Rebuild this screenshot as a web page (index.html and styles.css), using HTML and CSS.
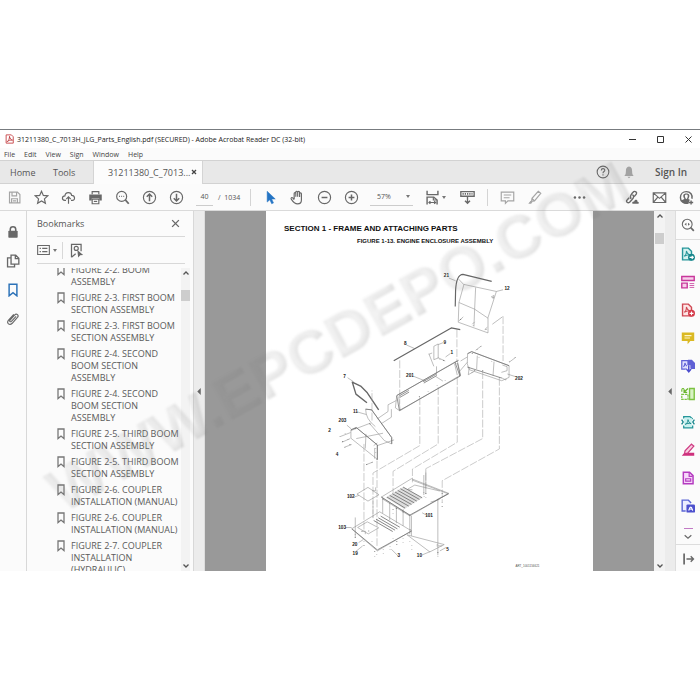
FILE: index.html
```html
<!DOCTYPE html>
<html lang="en">
<head>
<meta charset="utf-8">
<title>31211380_C_7013H_JLG_Parts_English.pdf</title>
<link rel="stylesheet" href="styles.css">
</head>
<body>
<main class="app">
  <header class="titlebar">
    <svg class="logo" viewBox="0 0 24 24"><path d="M3 1h14l5 5v17H3z" fill="#fff" stroke="#c9494c" stroke-width="2.5"/><path d="M6 19c4-3 6-8 6-14 1 6 4 9 8 10-6-1-10 1-14 4z" fill="none" stroke="#b62c30" stroke-width="2.2"/></svg>
    <h1 class="title">31211380_C_7013H_JLG_Parts_English.pdf (SECURED) - Adobe Acrobat Reader DC (32-bit)</h1>
    <div class="winbtns">
      <button aria-label="Minimize"><svg viewBox="0 0 9 9"><path d="M1 4.500h7"/></svg></button>
      <button aria-label="Maximize"><svg viewBox="0 0 9 9"><path d="M1.500 1.500h6v6h-6z"/></svg></button>
      <button aria-label="Close"><svg viewBox="0 0 9 9"><path d="M1.500 1.500l6 6m0-6l-6 6"/></svg></button>
    </div>
  </header>
  <nav class="menu">
    <button>File</button><button>Edit</button><button>View</button><button>Sign</button><button>Window</button><button>Help</button>
  </nav>
  <div class="tabs">
    <button class="tab home">Home</button>
    <button class="tab tools">Tools</button>
    <div class="doc-tab"><button class="tab">31211380_C_7013...</button><button class="close" aria-label="Close tab"><svg viewBox="0 0 6 6"><path d="M1 1l4 4m0-4L1 5"/></svg></button></div>
    <button class="round" aria-label="Help"><svg class="ico" viewBox="0 0 18 18"><circle cx="9" cy="9" r="7.500"/><path d="M6.800 7c0-3 4.500-3 4.500-.3C11.300 8.500 9 8.300 9 10.500M9 12v1.500"/></svg></button>
    <button class="round" aria-label="Notifications"><svg class="ico bell" viewBox="0 0 18 18"><path d="M9 2c3 1 4 2 4 6s1 5 2 6H3c1-1 2-2 2-6s1-5 4-6zM7 15h4l-2 2z"/></svg></button>
    <button class="signin">Sign In</button>
  </div>
  <div class="toolbar">
    <button class="tool pale" aria-label="Save"><svg class="ico" viewBox="0 0 18 18"><path d="M3 2.500h9.500l3 3v10H3zM6 3v4h5.500V3M5.500 15.500v-5h7v5M7 13h4"/></svg></button>
    <button class="tool" aria-label="Favorite"><svg class="ico" viewBox="0 0 18 18"><path d="M9 1.500l2.200 5 5.300.5-4 3.600 1.200 5.400L9 13.200 4.300 16l1.200-5.400-4-3.600 5.300-.5z"/></svg></button>
    <button class="tool" aria-label="Upload"><svg class="ico" viewBox="0 0 18 18"><path d="M6 12.500H4.500C.5 12 1 7 4.700 7 5.200 1.800 12.300 2 12.800 6.500c4.200 0 4.700 5.700.7 6H12M9 16.500V8.500M6.300 11L9 8.300l2.700 2.700"/></svg></button>
    <button class="tool" aria-label="Print"><svg class="ico" viewBox="0 0 18 18"><path d="M5 5V2h8v3M5 13v3.500h8V11H5z"/><path class="solid" d="M1.500 5.500h15v7h-3V10h-9v2.500h-3z"/><path d="M7 13.700h4"/></svg></button>
    <button class="tool" aria-label="Find"><svg class="ico" viewBox="0 0 18 18"><circle cx="8" cy="7.700" r="6"/><path d="M12.500 12l4 4.500" stroke-width="2.200"/><path d="M5 7.700h1m1.500 0h1m1.500 0h1" stroke-width="1.600"/></svg></button>
    <button class="tool" aria-label="Previous page"><svg class="ico" viewBox="0 0 18 18"><circle cx="9" cy="9" r="7.300"/><path d="M9 13.500V5M5.700 8L9 4.800 12.300 8" stroke-width="1.800"/></svg></button>
    <button class="tool" aria-label="Next page"><svg class="ico" viewBox="0 0 18 18"><circle cx="9" cy="9" r="7.300"/><path d="M9 4.500V13M5.700 10L9 13.200l3.300-3.200" stroke-width="1.800"/></svg></button>
    <input class="pageno" aria-label="Page number" value="40"><span class="total">/&nbsp; 1034</span>
    <span class="rule r1"></span>
    <button class="tool" aria-label="Select"><svg class="ico" viewBox="0 0 18 18"><path d="M5 1.500v13l3.200-2.800 2.200 4.800 2.200-1-2.200-4.700h4.300z" fill="#2474c4" stroke="#2474c4" stroke-width=".6"/></svg></button>
    <button class="tool" aria-label="Hand"><svg class="ico" viewBox="0 0 18 18"><path d="M5 11V4.200c0-1.500 2-1.500 2 0V8 2.600c0-1.500 2.200-1.500 2.200 0V8 2.800c0-1.500 2.300-1.500 2.300 0V8.500 4.500c0-1.500 2.200-1.500 2.200 0V12c0 3-1.700 4.700-4.700 4.700-3.200 0-4.500-1.200-7.500-5.800-.8-1.500.8-2.500 1.800-1.400L5 11.500"/></svg></button>
    <button class="tool" aria-label="Zoom out"><svg class="ico" viewBox="0 0 18 18"><circle cx="9" cy="9" r="7.300"/><path d="M5.500 9h7" stroke-width="1.800"/></svg></button>
    <button class="tool" aria-label="Zoom in"><svg class="ico" viewBox="0 0 18 18"><circle cx="9" cy="9" r="7.300"/><path d="M5.500 9h7M9 5.500v7" stroke-width="1.800"/></svg></button>
    <div class="zoom"><select aria-label="Zoom level"><option>57%</option></select><i class="caret"></i></div>
    <button class="tool fit" aria-label="Fit width"><svg class="ico" viewBox="0 0 18 18"><path d="M2.500 1v4.500h13V1M2.500 17.500V8.500h8l4 3.500v5.500" stroke-width="1.700"/><path d="M10 8.500V12h4M5 15h7M6.500 13.300L4.700 15l1.800 1.700M11 13.300l1.800 1.700-1.800 1.700"/></svg><i class="caret"></i></button>
    <button class="tool" aria-label="Keyboard"><svg class="ico" viewBox="0 0 18 18"><path d="M1 2h16v5.500H1zM9 7.500v8.500M6 13l3 3 3-3" stroke-width="1.600"/><path d="M3 4.700h12" stroke-dasharray="1.500 1.200" stroke-width="2"/></svg></button>
    <span class="rule r2"></span>
    <button class="tool pale" aria-label="Comment"><svg class="ico" viewBox="0 0 18 18"><path d="M1.500 2.500h15v10.500H9.500L6.500 16v-3h-5zM4.500 6h9M4.500 9.300h7"/></svg></button>
    <button class="tool pale" aria-label="Highlight"><svg class="ico" viewBox="0 0 18 18"><path d="M13.500 1.500l3 2.500-7.500 9-3.500.5.500-3.500zM6 10l3 3M5 13.500l-1.500 2"/><path class="solid" d="M4.500 13l2 1.500-1.500 2H1.500z"/></svg></button>
    <button class="tool more" aria-label="More tools"><svg class="ico" viewBox="0 0 18 18"><g class="solid"><circle cx="3.500" cy="9" r="1.500"/><circle cx="9" cy="9" r="1.500"/><circle cx="14.500" cy="9" r="1.500"/></g></svg></button>
    <div class="share">
      <button class="tool" aria-label="Share link"><svg class="ico" viewBox="0 0 18 18"><path d="M7.500 10.500C4.500 8 9 3 10.500 2s4.500.5 3 3L11 8M9 5.500c3 2 .5 5-1 6.500l-2.500 2.700C3.500 16.500.5 14 2.500 12L5 9.200" stroke-width="1.700"/><path class="solid" d="M9 16.500c-1-2 .5-3 2-2.700.5-3 4.300-2.500 4 .2 2 0 2 2 1 2.500z"/></svg></button>
      <button class="tool" aria-label="Email"><svg class="ico" viewBox="0 0 18 18"><path d="M1.500 3.500h15v11.500h-15zM1.500 3.500L9 10l7.500-6.500M1.500 15l5.500-6.500M16.500 15L11 8.500"/></svg></button>
      <button class="tool" aria-label="Add people"><svg class="ico" viewBox="0 0 18 18"><path d="M11.500 15.500C6 17.500 1.700 13.500 1.700 9.200 1.700 4.500 5 1.900 8.800 1.900c5 0 7.800 4.200 6.700 8.600" stroke-width="1.700"/><path class="solid" d="M2.500 12.500l4-1.700c-2.500-4-1.500-6.500 2.300-6.500s4.700 2.500 2.400 6.500l1.800 1-1.500 3.700C8 17 4.500 16 2.500 12.500z" fill-rule="evenodd"/><path d="M8.800 5.500c-2 0-2.200 2-1 4.500.7 1.300 1.300 1.300 2 0 1.200-2.500 1-4.500-1-4.500z" fill="#fbfbfb" stroke="none"/><path d="M14.500 12.500v5M12 15h5" stroke-width="1.700"/></svg></button>
    </div>
  </div>
  <div class="body">
    <nav class="rail left">
      <button aria-label="Security"><svg class="ico" viewBox="0 0 18 18"><path d="M5.500 9V5.500c0-4.500 7-4.500 7 0V9" stroke-width="2"/><rect class="solid" x="3" y="7.500" width="12" height="9" rx="1"/></svg></button>
      <button aria-label="Pages"><svg class="ico" viewBox="0 0 18 18"><path d="M6.500 1.500h6l4 4V13h-10zM12 2v4h4M6 5H2v11.500h9V13.500" stroke-width="1.700"/></svg></button>
      <button class="current" aria-label="Bookmarks"><svg class="ico" viewBox="0 0 18 18"><path d="M4 1.500h10v15L9 12.500l-5 4z" stroke-width="1.900"/></svg></button>
      <button aria-label="Attachments"><svg class="ico" viewBox="0 0 18 18"><path d="M13 5.500L7 12c-1.300 1.300-3-.2-1.800-1.600L11 4c2.700-2.800 6 .3 3.700 3L8 14.500c-3.500 3.500-7.800-.3-4.700-4L10 3" stroke-width="1.500"/></svg></button>
    </nav>
    <section class="panel">
      <div class="panel-head"><h2>Bookmarks</h2><button aria-label="Close panel"><svg class="ico" viewBox="0 0 18 18"><path d="M3.500 3.500l11 11m0-11l-11 11" stroke-width="2.200"/></svg></button></div>
      <div class="panel-tools">
        <button class="options" aria-label="Options"><svg class="ico wide" viewBox="0 0 20 18"><path d="M1 2h18v14H1zM8 6.500h8M8 11.500h8" stroke-width="1.700"/><path d="M4 6.500h2M4 11.500h2" stroke-width="2.200"/></svg><i class="caret"></i></button>
        <button class="find" aria-label="Find bookmark"><svg class="ico" viewBox="0 0 18 18"><path d="M3 17V1.500h11.500V10M3 17l5-4" stroke-width="1.500"/><circle cx="8.700" cy="6.500" r="2.400"/><path class="solid" d="M10 8.500l7 6-3.500.3L11 17.500z"/></svg></button>
      </div>
      <div class="list-wrap">
        <ul class="list">
          <li><svg viewBox="0 0 8 12"><path d="M1 1h6v9.500L4 8l-3 2.500z"/></svg><a href="#">FIGURE 2-2. BOOM ASSEMBLY</a></li>
          <li><svg viewBox="0 0 8 12"><path d="M1 1h6v9.500L4 8l-3 2.500z"/></svg><a href="#">FIGURE 2-3. FIRST BOOM SECTION ASSEMBLY</a></li>
          <li><svg viewBox="0 0 8 12"><path d="M1 1h6v9.500L4 8l-3 2.500z"/></svg><a href="#">FIGURE 2-3. FIRST BOOM SECTION ASSEMBLY</a></li>
          <li><svg viewBox="0 0 8 12"><path d="M1 1h6v9.500L4 8l-3 2.500z"/></svg><a href="#">FIGURE 2-4. SECOND<br>BOOM SECTION<br>ASSEMBLY</a></li>
          <li><svg viewBox="0 0 8 12"><path d="M1 1h6v9.500L4 8l-3 2.500z"/></svg><a href="#">FIGURE 2-4. SECOND<br>BOOM SECTION<br>ASSEMBLY</a></li>
          <li><svg viewBox="0 0 8 12"><path d="M1 1h6v9.500L4 8l-3 2.500z"/></svg><a href="#">FIGURE 2-5. THIRD BOOM SECTION ASSEMBLY</a></li>
          <li><svg viewBox="0 0 8 12"><path d="M1 1h6v9.500L4 8l-3 2.500z"/></svg><a href="#">FIGURE 2-5. THIRD BOOM SECTION ASSEMBLY</a></li>
          <li><svg viewBox="0 0 8 12"><path d="M1 1h6v9.500L4 8l-3 2.500z"/></svg><a href="#">FIGURE 2-6. COUPLER<br>INSTALLATION (MANUAL)</a></li>
          <li><svg viewBox="0 0 8 12"><path d="M1 1h6v9.500L4 8l-3 2.500z"/></svg><a href="#">FIGURE 2-6. COUPLER<br>INSTALLATION (MANUAL)</a></li>
          <li><svg viewBox="0 0 8 12"><path d="M1 1h6v9.500L4 8l-3 2.500z"/></svg><a href="#">FIGURE 2-7. COUPLER<br>INSTALLATION<br>(HYDRAULIC)</a></li>
        </ul>
        <div class="scroll narrow"><svg viewBox="0 0 8 6"><path d="M1.500 4.500L4 2l2.500 2.500"/></svg><i class="thumb"></i><svg viewBox="0 0 8 6"><path d="M1.500 1.500L4 4l2.500-2.500"/></svg></div>
      </div>
    </section>
    <div class="strip"><svg viewBox="0 0 4 8"><path d="M4 0v8L0 4z"/></svg></div>
    <section class="viewer">
      <article class="page">
        <h2 class="section">SECTION 1 - FRAME AND ATTACHING PARTS</h2>
        <h3 class="figure">FIGURE 1-13. ENGINE ENCLOSURE ASSEMBLY</h3>
        <svg class="drawing" viewBox="266 250 326 321" role="img" aria-label="Engine enclosure, exploded view">
          <g transform="translate(320 260) scale(.33333)">
            <g class="thin">
              <path d="M430 73L527 94 502 172 502 218 413 186 415 127 430 73M415 127l47 20 40 27M465 82l-3 65-2 52M414 57l16 17M385 54l20 8M527 94l20-5"/>
              <path d="M512 110l8-4-2 9zM415 182l13-12M455 192l7-7M492 208l8-7"/>
              <path d="M340 258l13-7v42l-13 5zM353 253l15-6M352 292l22 10M375 290l14-10M325 280l15 38M335 278l-10 4M258 254l25 11"/>
              <path d="M441 280l12-6 112 42v35l-22 10-97-33-6-18zM470 286l-2 40M520 304l-3 42M440 290l-20 12M440 306l-24 28M465 270l17-13M565 306l20-15M560 341l25 8M446 320l-3 23 18-10M545 314l14 5v12l-17 5M542 352l14 7"/>
              <path d="M229 406l181-105 10 43-182 107-13-9zM235 408l4 41M402 310l8 34M280 348l35 14M345 348l22 14M348 318v28"/>
              <path d="M228 420l-25 13v20l-32 22M213 446v24l-31 20M82 352l18 12M110 454l28 8M545 170l-30 22"/>
            </g>
            <g class="dash"><path d="M238 300v130M409 208v96M547 168v134M298 410v145l-140 82v135M353 380v170l-135 82v73M410 350v195l-134 80v40M486 332v202l-170 90v60M536 352v213l-171 95v65"/></g>
            <g class="mid"><path d="M229 405l185-105M237 406l28-16M238 411l28-16M308 364l38-22M310 368l38-22M229 406l8 44 182-103-8-38M403 305l15 42M441 280l12-6 112 42M440 320l103 33"/></g>
            <g class="dark"><path d="M220 301l172-98 27 5M404 139l1-47q2-48 22-49l86 21"/><path d="M140 427l-33-26-11-36 25 12 20 20 34 51" stroke-width="4"/></g>
            <g class="thin">
              <path d="M136 446l18 2 60 83v19l-22-10-45-52M136 446q0 30 29 52M92 508l16-7 63 52v43l-79-63zM137 520l-2 44M160 555l11-8M163 562v32M92 510l58-22M108 534l80-16M60 528l31-12M65 545l25-11M72 560l22-8M80 494l13 11M138 612l20-8M171 555l50-17"/>
            </g>
            <g class="dash"><path d="M131 550v260M170 600v255M155 480V390M158 770v-50"/></g>
            <g class="thin">
              <path d="M110 700l33-20 33 22-33 19zM101 709l15-5M156 690h10v-10"/>
              <path d="M183 709l90-55 112 44-115 66zM187 715l80 50M262 685l21-12 75 18M350 716l32-16M258 687h18M330 724l27-8M275 658l110 42M305 756l15 8"/>
              <path d="M94 804l84-51 95 57-102 60zM112 800l29-17 34 18-31 18zM75 800h19M123 811h12v9M260 822l111 29-43 22zM348 855h17M305 882l24-10M358 870l18-10M213 865l20 20M115 845l14-9M105 873l22-18"/>
              <path d="M187 710v47M208 728v50M228 737v50M248 745v50M268 760v60M273 765v60M310 643v60M316 630v70M105 770v60M352 718v165"/>
            </g>
            <path class="grate" d="M196 710l52-31 58 32-54 34z"/>
            <path class="slats" d="M248 679l57 32M240 684l57 32M232 689l57 32M224 694l57 32M216 699l57 32M208 704l57 32M200 709l54 33M181 766l57 33M174 771l57 33M167 775l57 33M160 779l57 33"/>
            <g class="mid"><path d="M183 709l85 54 115-64M95 804l76 63 102-56M92 508l16-7 63 52v43M136 446l18 2 60 83v19"/></g>
            <path class="bolts" d="M420 178v1M458 194v1M496 208v1M517 112v1M369 300v1M358 296v1M470 266v1M481 257v1M566 304v1M583 292v1M454 337v1M462 330v1M297 407v1M323 393v1M350 376v1M374 361v1M239 446v1M455 279v1M475 290v1M486 330v1M513 304v1M536 351v1M556 357v1M409 310v1M59 526v1M75 517v1M67 543v1M83 535v1M74 559v1M89 552v1M105 504v1M139 611v1M155 606v1M149 490v1M166 563v1M166 575v1M170 596v1M188 717v1M208 729v1M228 742v1M248 753v1M268 763v1M310 695v1M316 697v1M311 708v1M316 710v1M365 697v1M365 725v1M365 736v1M350 717v1M218 745v1M218 758v1M105 820v1M105 830v1M131 840v1M131 854v1M163 872v1M169 879v1M163 886v1M189 865v1M189 877v1M209 855v1M209 865v1M229 842v1M229 851v1M248 832v1M248 843v1M268 840v1M274 853v1M274 864v1M352 875v1M352 886v1M155 841v1M218 832v1M125 812v1M145 810v1M350 850v1M270 806v1"/>
            <g class="nums">
              <text x="370" y="52">21</text><text x="551" y="91">12</text><text x="251" y="253">8</text><text x="369" y="252">9</text><text x="390" y="281">1</text><text x="257" y="351">201</text><text x="583" y="360">202</text><text x="69" y="354">7</text><text x="98" y="457">11</text><text x="55" y="485">203</text><text x="24" y="513">2</text><text x="47" y="585">4</text><text x="80" y="713">102</text><text x="314" y="770">101</text><text x="54" y="803">103</text><text x="96" y="855">20</text><text x="97" y="883">19</text><text x="231" y="888">3</text><text x="289" y="887">10</text><text x="377" y="869">5</text>
              <text class="art" x="584" y="918">ART_1001156621</text>
            </g>
          </g>
        </svg>
      </article>
    </section>
    <div class="scroll main"><svg viewBox="0 0 8 6"><path d="M1.500 4.500L4 2l2.500 2.500"/></svg><i class="thumb"></i><svg viewBox="0 0 8 6"><path d="M1.500 1.500L4 4l2.500-2.500"/></svg></div>
    <div class="strip"><svg viewBox="0 0 4 8"><path d="M4 0v8L0 4z"/></svg></div>
    <nav class="rail right">
      <button aria-label="Search tools"><svg class="ico" viewBox="0 0 18 18"><circle cx="8" cy="8" r="6.300"/><path d="M12.500 12.500l4 4" stroke-width="2.200"/><path d="M4.500 8L7 6v4zM11.500 8L9 6v4z" class="solid"/></svg></button>
      <button class="lined" aria-label="Export PDF"><svg class="ico" viewBox="0 0 18 18"><path d="M2 1.500h7.500l4 4v11H2z" fill="#d5f2f0" stroke="#26969a" stroke-width="1.800"/><path d="M4 12c2-1 3-4 3-7 1 4 2 5 5 5-4 0-6 1-8 2z" stroke="#26969a"/><circle cx="13.500" cy="13.300" r="4.500" fill="#16858b" stroke="none"/><path d="M11 13.300h4.500M13.800 11.300l2 2-2 2" stroke="#fff"/></svg></button>
      <button aria-label="Edit PDF"><svg class="ico" viewBox="0 0 18 18"><path d="M1 2h16v5H1zM1 10.500h7v6H1z" fill="#f7cfea" stroke="#c8379b" stroke-width="1.800"/><path d="M11 11h6M11 13.500h6M11 16h6" stroke="#c8379b" stroke-width="1"/></svg></button>
      <button aria-label="Create PDF"><svg class="ico" viewBox="0 0 18 18"><path d="M2 1.500h7.500l4 4v11H2z" fill="#fde5e5" stroke="#cf4a55" stroke-width="1.800"/><path d="M4 12c2-1 3-4 3-7 1 4 2 5 5 5-4 0-6 1-8 2z" stroke="#cf4a55"/><circle cx="13.500" cy="13.300" r="4.500" fill="#d43a49" stroke="none"/><path d="M11 13.300h5M13.500 10.800v5" stroke="#fff"/></svg></button>
      <button aria-label="Comment"><svg class="ico" viewBox="0 0 18 18"><path d="M1 2h16v11h-5l-3.500 4v-4H1z" fill="#dbb923" stroke="none"/><path d="M4.500 6h9M4.500 9h7" stroke="#fff6c5" stroke-width="1.500"/></svg></button>
      <button aria-label="Combine files"><svg class="ico" viewBox="0 0 18 18"><path d="M9 1h5l4 4v8H9z" fill="#6061d5" stroke="none"/><path d="M1 2h8v11H1z" fill="#e1e1ff" stroke="#6061d5" stroke-width="1.600"/><path d="M3 10c2-1 2-3 2-5 1 3 2 4 3 4" stroke="#6061d5"/><path d="M10 8v8M7 13l3 3.500 3-3.500" stroke="#fff" stroke-width="4"/><path d="M10 8v8M7 13l3 3.500 3-3.500" stroke="#4c4dcd" stroke-width="1.900"/></svg></button>
      <button aria-label="Organize pages"><svg class="ico" viewBox="0 0 18 18"><path d="M11 2h6v14h-6z" fill="#d8f2c4" stroke="#7cc242" stroke-width="1.800"/><path d="M1 9.500h8V16H1zM1 6V2h3" stroke="#7cc242" stroke-width="1.600" stroke-dasharray="3 1"/><path d="M9 2L4 6.500M4 3v4h4" stroke="#6bb52f" stroke-width="1.700"/></svg></button>
      <button aria-label="Compress PDF"><svg class="ico" viewBox="0 0 18 18"><path d="M3.500 4.500V2h8l3.500 3M3.500 13.500V16.500h11.500V13.500" fill="#c9f0ee" stroke="#26969a" stroke-width="1.700"/><path d="M4 4h10v10H4z" fill="#c9f0ee" stroke="none"/><path d="M.8 6l2 3-2 3M17.200 6l-2 3 2 3" stroke="#16858b" stroke-width="1.700"/><path d="M5.500 12c2-1 3.500-3 3.500-6 .8 3 2 4.500 4 5-3-.8-5.500 0-7.500 1z" stroke="#16858b" stroke-width="1.200"/></svg></button>
      <button aria-label="Redact"><svg class="ico" viewBox="0 0 18 18"><path d="M13.500 1.500l3 2.500-8 9-4 1 .7-4z" fill="#f9cfe0" stroke="#ce3a83" stroke-width="1.600"/><path d="M10 12.500h7v4H1l2.500-3 3 .8z" fill="#ce2f7c" stroke="none"/></svg></button>
      <button aria-label="Protect"><svg class="ico" viewBox="0 0 18 18"><path d="M3 1.500h8l4.500 4.500v10.500H3z" fill="#f7d8fa" stroke="#b43bc0" stroke-width="1.900"/><path d="M10.500 2v5H15M6 10h6.500v3H6z" stroke="#b43bc0" stroke-width="1.500"/></svg></button>
      <button aria-label="Fill and sign"><svg class="ico" viewBox="0 0 18 18"><path d="M6 15.500H1.500v-14h8l3.500 3.500" stroke="#5c67d5" stroke-width="1.800" fill="#ecedff"/><rect x="7" y="7" width="11" height="10.500" rx="1.500" fill="#4d50cd" stroke="none"/><path d="M10 15c1.500-6 3.500-6 5 0M10 13.500c2-1 3.500-1 5 0" stroke="#fff"/></svg></button>
      <i class="peek"></i>
      <button class="more-tools" aria-label="Scroll tools"><svg class="ico" viewBox="0 0 18 18"><path d="M3 6l6 5 6-5" stroke-width="2.200"/></svg></button>
      <button class="lined-top" aria-label="Open pane"><svg class="ico" viewBox="0 0 18 18"><path d="M4 2v14" stroke-width="2.200"/><path d="M7 9h9M12.500 5.500L16 9l-3.500 3.500" stroke-width="1.800"/></svg></button>
    </nav>
  </div>
</main>
<svg class="watermark" viewBox="0 0 700 700" aria-hidden="true">
  <defs>
    <filter id="emboss" x="-5%" y="-30%" width="110%" height="160%">
      <feGaussianBlur in="SourceAlpha" stdDeviation="3" result="soft"/>
      <feOffset in="soft" dx="-2" dy="-2" result="shift"/>
      <feComposite in="SourceAlpha" in2="shift" operator="out" result="edge"/>
      <feFlood flood-color="#777" flood-opacity=".22"/>
      <feComposite in2="edge" operator="in" result="shade"/>
      <feFlood flood-color="#888" flood-opacity=".07"/>
      <feComposite in2="SourceAlpha" operator="in" result="base"/>
      <feMerge result="all"><feMergeNode in="base"/><feMergeNode in="shade"/></feMerge>
      <feGaussianBlur in="all" stdDeviation="1"/>
    </filter>
  </defs>
  <text x="349" y="355" text-anchor="middle" transform="rotate(-29 349 355)" filter="url(#emboss)">WWW.EPCDEPO.COM</text>
</svg>
</body>
</html>
```
FILE: styles.css
```css
* { box-sizing: border-box; }
body { margin: 0; height: 100vh; padding: 129px 0; display: flex; background: #fff; color: #555; font-family: "Open Sans", "Noto Sans", sans-serif; font-size: 9px; position: relative; overflow: hidden; }
button, input, select { font: inherit; color: inherit; border: 0; background: none; padding: 0; margin: 0; }
button { display: flex; align-items: center; justify-content: center; }
h1, h2, h3, ul { margin: 0; padding: 0; font-weight: 400; list-style: none; }
svg { flex: none; display: block; }
.app { flex: 1; min-width: 0; display: flex; flex-direction: column; background: #fbfbfb; border-top: 1px solid #777b7f; }

.ico { width: 15px; height: 15px; fill: none; stroke: #686868; stroke-width: 1.4; }
.solid { fill: #686868; stroke: none; }
.pale .ico { stroke: #a5a5a5; }
.pale .solid { fill: #a5a5a5; }
.caret { flex: none; border: 2px solid transparent; border-top: 3px solid #777; border-bottom: 0; }

.titlebar { flex: none; height: 18px; display: flex; align-items: center; background: #fff; color: #222; padding-left: 5px; }
.logo { width: 9px; height: 10px; }
.title { font-size: 7px; margin-left: 3px; white-space: nowrap; }
.winbtns { margin-left: auto; display: flex; padding-right: 7px; }
.winbtns button { width: 28px; height: 18px; justify-content: flex-end; }
.winbtns svg { width: 9px; height: 9px; fill: none; stroke: #333; stroke-width: 1; }
.menu { flex: none; height: 12px; display: flex; gap: 9px; padding-left: 4px; font-size: 7px; color: #444; }
.tabs { flex: none; height: 24px; display: flex; align-items: stretch; background: #e8e8e8; border-top: 1px solid #d2d2d2; border-bottom: 1px solid #d2d2d2; }
.home { padding-left: 10px; width: 53px; justify-content: flex-start; }
.tools { width: 40px; justify-content: flex-start; }
.doc-tab { display: flex; background: #fcfcfc; width: 110px; margin-bottom: -1px; padding: 0 5px 1px 14px; justify-content: space-between; border-left: 1px solid #d4d4d4; border-right: 1px solid #d4d4d4; }
.close svg { width: 6px; height: 6px; stroke: #444; stroke-width: 1.3; }
.round { width: 26px; }
.doc-tab + .round { margin-left: auto; }
.round .ico { width: 14px; height: 14px; }
.round .bell { fill: #a2a2a2; stroke: none; }
.signin { width: 58px; font-size: 10px; font-weight: 600; }

.toolbar { flex: none; height: 27px; display: flex; align-items: center; padding-left: 1px; border-bottom: 1px solid #dadada; font-size: 7px; }
.tool { flex: none; width: 27px; height: 26px; }
.pageno { width: 17px; height: 18px; margin-left: 6px; text-align: center; border-bottom: 1px solid #ccc; }
.total { margin-left: 5px; width: 32px; white-space: nowrap; }
.rule { width: 1px; height: 17px; background: #d4d4d4; }
.r1 { margin-right: 6px; }
.r2 { margin: 0 6px; }
.zoom { width: 43px; height: 18px; margin: 0 9px 0 5px; padding: 0 3px 0 7px; display: flex; align-items: center; justify-content: space-between; border-bottom: 1px solid #ccc; }
.zoom select { appearance: none; width: 24px; }
.fit { gap: 2px; margin-right: 5px; }
.more { margin-left: 18px; }
.share { display: flex; margin-left: auto; }

.body { flex: 1; min-height: 0; display: flex; }
.rail { flex: none; display: flex; flex-direction: column; }
.left { width: 26px; padding-top: 6px; }
.left button { height: 29px; }
.left .ico { width: 14px; height: 14px; }
.current .ico { stroke: #2c72b8; }
.panel { flex: none; width: 168px; border-left: 1px solid #d8d8d8; border-right: 1px solid #d8d8d8; padding-left: 10px; display: flex; flex-direction: column; min-height: 0; }
.panel-head { flex: none; height: 26px; margin-right: 8px; display: flex; align-items: center; justify-content: space-between; border-bottom: 1px solid #d8d8d8; }
.panel-head h2 { font-size: 9px; }
.panel-head .ico { width: 11px; height: 11px; }
.panel-head button { width: 19px; }
.panel-tools { flex: none; height: 27px; margin-right: 8px; display: flex; align-items: center; border-bottom: 1px solid #d8d8d8; }
.options { gap: 3px; width: 26px; height: 17px; justify-content: flex-start; border-right: 1px solid #d8d8d8; }
.wide { width: 13px; height: 12px; }
.find { margin-left: 6px; }
.list-wrap { flex: 1; min-height: 0; margin-top: 4px; margin-right: 3px; display: flex; overflow: hidden; }
.list { flex: 1; margin-top: -4px; padding-left: 20px; min-width: 0; }
.list li { display: flex; gap: 6px; margin-bottom: 4px; line-height: 12px; }
.list a { color: #5a5a5a; text-decoration: none; width: 110px; flex: none; }
.list svg { width: 8px; height: 12px; fill: none; stroke: #777; stroke-width: 1.3; }
.scroll { flex: none; width: 11px; display: flex; flex-direction: column; align-items: center; background: #f3f3f3; padding: 2px 0; }
.scroll svg { width: 8px; height: 6px; fill: none; stroke: #555; stroke-width: 1.3; }
.scroll svg:last-child { margin-top: auto; }
.scroll .thumb { width: 9px; height: 11px; margin-top: 14px; background: #cdcdcd; }
.scroll.narrow { width: 9px; }
.strip { flex: none; width: 11px; background: #ececec; display: flex; align-items: center; justify-content: center; border-right: 1px solid #ddd; }
.strip svg { width: 4px; height: 7px; fill: #666; }
.viewer { flex: 1; min-width: 0; background: #999; padding: 0 61px; overflow: hidden; }
.page { background: #fff; height: 100%; overflow: hidden; color: #111; font-family: "Liberation Sans", Arial, sans-serif; }
.section { font-size: 8px; line-height: 14px; padding: 11px 0 0 18px; font-weight: 700; white-space: nowrap; }
.figure { font-size: 6px; line-height: 10px; padding-left: 91px; margin-bottom: 4px; font-weight: 700; white-space: nowrap; }
.drawing { width: 100%; fill: none; stroke: #777; stroke-linejoin: round; }
.thin { stroke-width: 1.7; stroke: #8c8c8c; }
.dash { stroke-width: 1.7; stroke: #a4a4a4; stroke-dasharray: 24 5; }
.mid { stroke-width: 2.2; stroke: #6c6c6c; }
.dark { stroke-width: 3.5; stroke: #666; }
.grate { fill: #ddd; stroke: none; }
.slats { stroke: #6a6a6a; stroke-width: 2.4; }
.bolts { stroke: #444; stroke-width: 3.5; }
.nums { fill: #222; stroke: none; font-size: 14px; font-weight: 700; }
.nums .art { font-size: 9px; font-weight: 400; fill: #555; }

.right { width: 24px; align-items: center; }
.right button { width: 24px; height: 28px; flex: none; }
.right .lined { border-top: 1px solid #ddd; height: 29px; }
.right .ico { width: 14px; height: 14px; }
.peek { flex: none; width: 9px; height: 1px; margin-top: 8px; background: #c27ac5; }
.right .more-tools { height: 15px; }
.right .more-tools .ico { width: 10px; height: 10px; }
.right .lined-top { border-top: 1px solid #ddd; height: 28px; }
.watermark { position: absolute; left: 0; top: 0; width: 100%; pointer-events: none; font-family: "Liberation Sans", Arial, sans-serif; font-size: 62px; font-weight: 700; }
```
